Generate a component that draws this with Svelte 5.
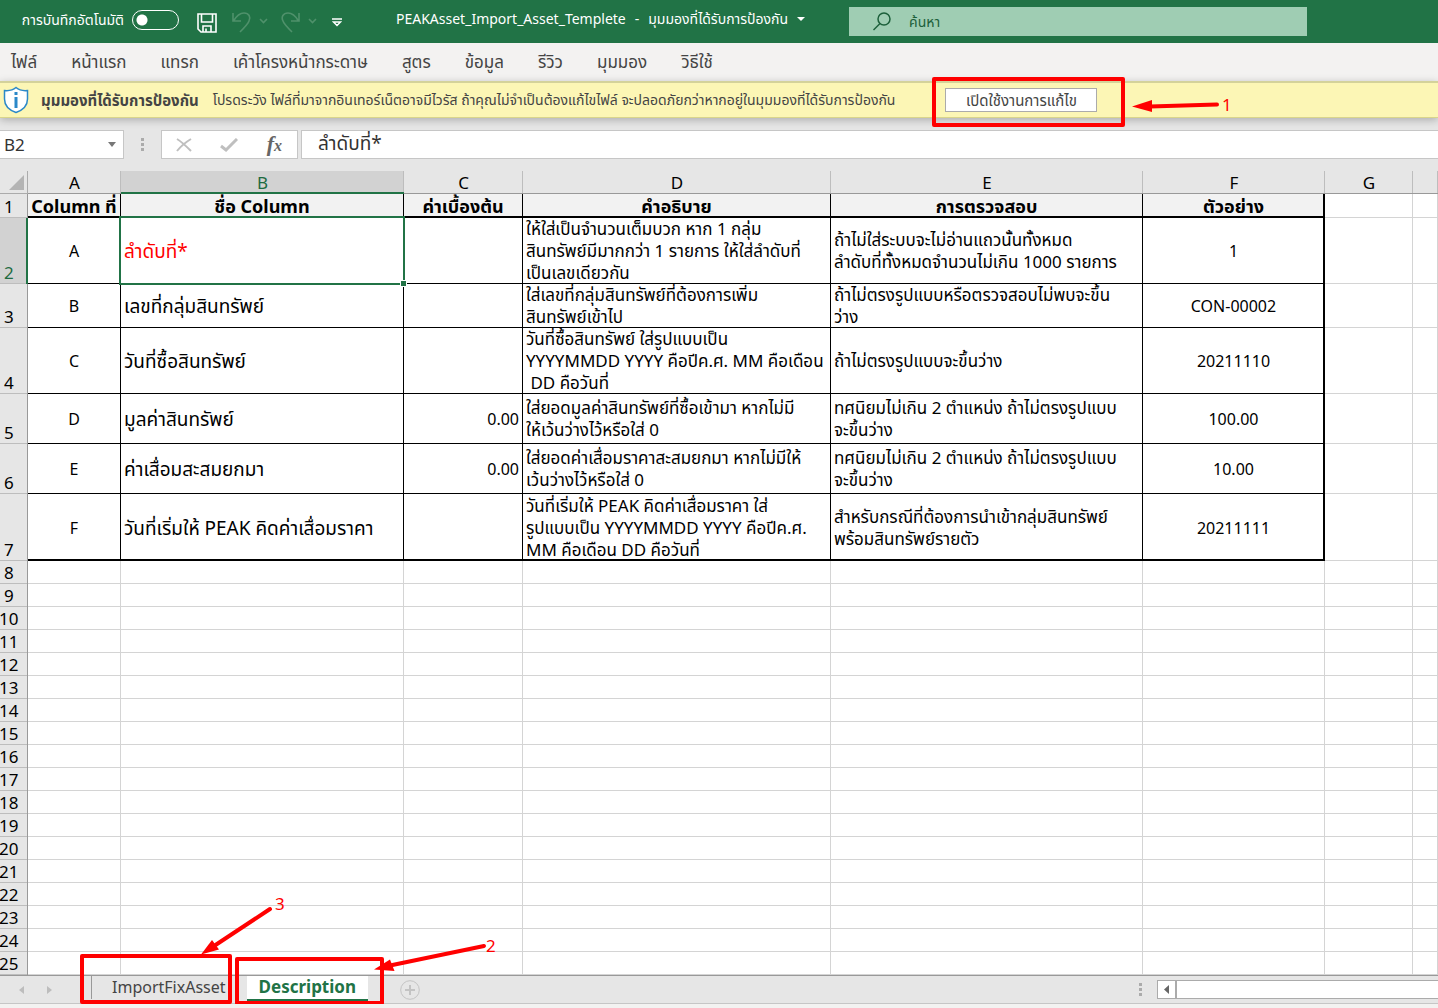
<script lang="ts">

    let autosave = $state(false);
    let search = $state('');
    let cell = $state('B2');
    let formula = $state('ลำดับที่*');
    let sheet = $state('Description');

    const menus = ['ไฟล์', 'หน้าแรก', 'แทรก', 'เค้าโครงหน้ากระดาษ', 'สูตร', 'ข้อมูล', 'รีวิว', 'มุมมอง', 'วิธีใช้'];

    const columns = ['A', 'B', 'C', 'D', 'E', 'F', 'G', ''];

    const titles = ['Column ที่', 'ชื่อ Column', 'ค่าเบื้องต้น', 'คำอธิบาย', 'การตรวจสอบ', 'ตัวอย่าง'];

    const rows = [
        {
            size: 'tall',
            cells: ['A', 'ลำดับที่*', '',
                'ให้ใส่เป็นจำนวนเต็มบวก หาก 1 กลุ่ม\nสินทรัพย์มีมากกว่า 1 รายการ ให้ใส่ลำดับที่\nเป็นเลขเดียวกัน',
                'ถ้าไม่ใส่ระบบจะไม่อ่านแถวนั้นทั้งหมด\nลำดับที่ทั้งหมดจำนวนไม่เกิน 1000 รายการ',
                '1']
        },
        {
            size: 'short',
            cells: ['B', 'เลขที่กลุ่มสินทรัพย์', '',
                'ใส่เลขที่กลุ่มสินทรัพย์ที่ต้องการเพิ่ม\nสินทรัพย์เข้าไป',
                'ถ้าไม่ตรงรูปแบบหรือตรวจสอบไม่พบจะขึ้น\nว่าง',
                'CON-00002']
        },
        {
            size: 'tall',
            cells: ['C', 'วันที่ซื้อสินทรัพย์', '',
                'วันที่ซื้อสินทรัพย์ ใส่รูปแบบเป็น\nYYYYMMDD YYYY คือปีค.ศ. MM คือเดือน\n DD คือวันที่',
                'ถ้าไม่ตรงรูปแบบจะขึ้นว่าง',
                '20211110']
        },
        {
            size: 'medium',
            cells: ['D', 'มูลค่าสินทรัพย์', '0.00',
                'ใส่ยอดมูลค่าสินทรัพย์ที่ซื้อเข้ามา หากไม่มี\nให้เว้นว่างไว้หรือใส่ 0',
                'ทศนิยมไม่เกิน 2 ตำแหน่ง ถ้าไม่ตรงรูปแบบ\nจะขึ้นว่าง',
                '100.00']
        },
        {
            size: 'medium',
            cells: ['E', 'ค่าเสื่อมสะสมยกมา', '0.00',
                'ใส่ยอดค่าเสื่อมราคาสะสมยกมา หากไม่มีให้\nเว้นว่างไว้หรือใส่ 0',
                'ทศนิยมไม่เกิน 2 ตำแหน่ง ถ้าไม่ตรงรูปแบบ\nจะขึ้นว่าง',
                '10.00']
        },
        {
            size: 'last',
            cells: ['F', 'วันที่เริ่มให้ PEAK คิดค่าเสื่อมราคา', '',
                'วันที่เริ่มให้ PEAK คิดค่าเสื่อมราคา ใส่\nรูปแบบเป็น YYYYMMDD YYYY คือปีค.ศ.\nMM คือเดือน DD คือวันที่',
                'สำหรับกรณีที่ต้องการนำเข้ากลุ่มสินทรัพย์\nพร้อมสินทรัพย์รายตัว',
                '20211111']
        }
    ];

    const blanks = Array.from({ length: 18 }, (_, i) => i + 8);

</script>

<div class="app">

    <header class="titlebar">
        <label class="autosave">
            <span>การบันทึกอัตโนมัติ</span>
            <input type="checkbox" bind:checked={autosave} />
        </label>
        <div class="quick">
            <button class="save" aria-label="Save">
                <svg width="20" height="20" viewBox="0 0 20 20" fill="none" stroke="#fff" stroke-width="1.600">
                    <path d="M1 1H19V19H4L1 16Z" />
                    <path d="M4.500 1V9H15.500V1M6 19V13H14V19M9 15.500V19" />
                </svg>
            </button>
            <button class="history" aria-label="Undo">
                <svg width="36" height="21" viewBox="0 0 36 21" fill="none" stroke="#4f916b" stroke-width="1.600">
                    <path d="M1 1V9H9M1.500 9C5 3 8 1 12 1C17 1 19 5 17 9C16 12 13 15 8 20" />
                    <path d="M28 7L31.500 10.500L35 7" />
                </svg>
            </button>
            <button class="history" aria-label="Redo">
                <svg width="36" height="21" viewBox="0 0 36 21" fill="none" stroke="#4f916b" stroke-width="1.600">
                    <path d="M18 1V9H10M17.500 9C14 3 11 1 7 1C2 1 0 5 2 9C3 12 6 15 11 20" />
                    <path d="M28 7L31.500 10.500L35 7" />
                </svg>
            </button>
            <button class="customize" aria-label="Customize">
                <svg width="10" height="9" viewBox="0 0 10 9" fill="none" stroke="#fff" stroke-width="1.500">
                    <path d="M0 1H10M1.500 4L5 7.500L8.500 4Z" />
                </svg>
            </button>
        </div>
        <button class="filename">
            <span>PEAKAsset_Import_Asset_Templete</span>
            <span>-</span>
            <span>มุมมองที่ได้รับการป้องกัน</span>
            <svg width="8" height="4" viewBox="0 0 8 4"><path d="M0 0H8L4 4Z" fill="#fff" /></svg>
        </button>
        <label class="search">
            <svg width="18" height="19" viewBox="0 0 18 19" fill="none" stroke="#1c5f3a" stroke-width="1.500">
                <circle cx="11" cy="7" r="6" />
                <path d="M7 11.500L0.500 18" />
            </svg>
            <input type="text" placeholder="ค้นหา" aria-label="ค้นหา" bind:value={search} />
        </label>
    </header>

    <nav class="ribbon">
        {#each menus as menu}
            <button>{menu}</button>
        {/each}
    </nav>

    <section class="notice">
        <svg width="26" height="28" viewBox="0 0 26 28" fill="none">
            <path d="M13 1.500C10 4 6 5 1.500 4.500V13C1.500 20 6 24 13 26.500C20 24 24.500 20 24.500 13V4.500C20 5 16 4 13 1.500Z" fill="#fff" stroke="#2b88c8" stroke-width="1.500" />
            <path d="M13 6V9M13 11V22" stroke="#2b88c8" stroke-width="3" />
        </svg>
        <strong>มุมมองที่ได้รับการป้องกัน</strong>
        <p>โปรดระวัง ไฟล์ที่มาจากอินเทอร์เน็ตอาจมีไวรัส ถ้าคุณไม่จำเป็นต้องแก้ไขไฟล์ จะปลอดภัยกว่าหากอยู่ในมุมมองที่ได้รับการป้องกัน</p>
        <button>เปิดใช้งานการแก้ไข</button>
    </section>

    <section class="formula">
        <div class="namebox">
            <input type="text" aria-label="Name box" bind:value={cell} />
            <svg width="8" height="5" viewBox="0 0 8 5"><path d="M0 0H8L4 5Z" fill="#777" /></svg>
        </div>
        <div class="dots"></div>
        <div class="tools">
            <button aria-label="Cancel">
                <svg width="16" height="14" viewBox="0 0 16 14" fill="none" stroke="#bfbfbf" stroke-width="2">
                    <path d="M1 1C6 4 10 8 15 13M15 1C10 4 5 8 1 13" />
                </svg>
            </button>
            <button aria-label="Enter">
                <svg width="18" height="14" viewBox="0 0 18 14" fill="none" stroke="#bfbfbf" stroke-width="3">
                    <path d="M1 8L6 12L17 1" />
                </svg>
            </button>
            <button class="fx" aria-label="Insert function"><i>f</i><i class="x">x</i></button>
        </div>
        <input class="content" type="text" aria-label="Formula" bind:value={formula} />
    </section>

    <table>
        <colgroup>
            <col class="w-head" />
            <col class="w-a" />
            <col class="w-b" />
            <col class="w-c" />
            <col class="w-d" />
            <col class="w-e" />
            <col class="w-f" />
            <col class="w-g" />
            <col />
        </colgroup>
        <thead>
            <tr>
                <th class="corner">
                    <svg width="15" height="15" viewBox="0 0 15 15"><path d="M15 0V15H0Z" fill="#b4b4b4" /></svg>
                </th>
                {#each columns as column}
                    <th class="letter" class:active={column === 'B'}>{column}</th>
                {/each}
            </tr>
        </thead>
        <tbody>
            <tr class="titles">
                <th class="number">1</th>
                {#each titles as title}
                    <td class="filled">{title}</td>
                {/each}
                <td></td>
                <td></td>
            </tr>
            {#each rows as row, r}
                <tr class={row.size}>
                    <th class="number" class:active={r === 0}>{r + 2}</th>
                    {#each row.cells as text, c}
                        <td
                            class="filled"
                            class:center={c === 0 || c === 5}
                            class:name={c === 1}
                            class:right={c === 2}
                            class:detail={c === 3 || c === 4}
                            class:selected={r === 0 && c === 1}
                        >{text}</td>
                    {/each}
                    <td></td>
                    <td></td>
                </tr>
            {/each}
            {#each blanks as number}
                <tr>
                    <th class="number">{number}</th>
                    {#each columns as _}
                        <td></td>
                    {/each}
                </tr>
            {/each}
        </tbody>
    </table>

    <footer>
        <div class="arrows">
            <button aria-label="Previous sheet">
                <svg width="5" height="8" viewBox="0 0 5 8"><path d="M5 0V8L0 4Z" fill="#bdbdbd" /></svg>
            </button>
            <button aria-label="Next sheet">
                <svg width="5" height="8" viewBox="0 0 5 8"><path d="M0 0V8L5 4Z" fill="#bdbdbd" /></svg>
            </button>
        </div>
        <div class="sheets">
            {#each ['ImportFixAsset', 'Description'] as name}
                <button class:open={sheet === name} onclick={() => sheet = name}>{name}</button>
            {/each}
        </div>
        <button class="add" aria-label="New sheet">
            <svg width="20" height="20" viewBox="0 0 20 20" fill="none" stroke="#c3c3c3">
                <circle cx="10" cy="10" r="9.300" />
                <path d="M10 5V15M5 10H15" stroke-width="2" />
            </svg>
        </button>
        <div class="dots"></div>
        <div class="scroll">
            <button aria-label="Scroll left">
                <svg width="5" height="9" viewBox="0 0 5 9"><path d="M5 0V9L0 4.500Z" fill="#666" /></svg>
            </button>
            <div class="thumb"></div>
        </div>
    </footer>

    <svg class="marks" width="1438" height="1008" viewBox="0 0 1438 1008">
        <g fill="none" stroke="#f00" stroke-width="4" stroke-linejoin="round">
            <rect x="934" y="79" width="189" height="46" />
            <rect x="82" y="956" width="148" height="46" />
            <rect x="237" y="959" width="145" height="44" />
        </g>
        <g stroke="#f00" stroke-width="4" stroke-linecap="round">
            <path d="M1217 104.500L1150 106.500" />
            <path d="M270 909L214 946" />
            <path d="M484 946L390 965.500" />
        </g>
        <g fill="#f00">
            <path d="M1132 106.500L1152 100V112Z" />
            <path d="M201 954.500L212 940L219 949.500Z" />
            <path d="M374 969.500L390 959.500L394.500 971Z" />
            <text x="1222" y="111">1</text>
            <text x="486" y="952">2</text>
            <text x="275" y="910">3</text>
        </g>
    </svg>

</div>

<style>

    :global(body) {
        margin: 0;

        background-color: #f3f2f1;
    }

    .app {
        position: relative;

        overflow: hidden;

        font-family: "Noto Sans", "Noto Sans Thai", sans-serif;
        font-size: 16px;
        line-height: 22px;
        color: #000;
    }

    button, input {
        margin: 0;
        padding: 0;

        background: none;

        font: inherit;
        color: inherit;

        border: none;
        outline: none;
    }

    button {
        white-space: nowrap;

        cursor: pointer;
    }

    svg {
        display: block;
        flex: none;
    }

    .titlebar {
        display: flex;
        align-items: center;

        height: 43px;

        background-color: #217346;

        font-size: 14px;
        color: #fff;
    }

    .autosave {
        display: flex;
        align-items: center;
        justify-content: flex-end;
        gap: 8px;

        width: 179px;
        height: 40px;
        margin-bottom: 4px;

        white-space: nowrap;
    }

    .autosave input {
        flex: none;

        width: 47px;
        height: 20px;

        background: radial-gradient(circle at 9px 9px, #fff 5px, transparent 6px);

        border: 1px solid #fff;
        border-radius: 10px;

        appearance: none;
    }

    .quick {
        display: flex;
        align-items: center;
        gap: 13px;

        margin: 2px 0 0 18px;
    }

    .quick .save {
        margin-right: 2px;
    }

    .customize {
        padding-left: 2px;
    }

    .filename {
        display: flex;
        align-items: center;
        gap: 9px;

        height: 38px;
        margin-left: 54px;
        margin-bottom: 6px;
    }

    .search {
        display: flex;
        align-items: center;
        gap: 18px;

        box-sizing: border-box;
        width: 458px;
        height: 29px;
        margin-left: 44px;
        padding-left: 24px;

        background-color: #9fcdb3;

        color: #1c5f3a;
    }

    .search input::placeholder {
        color: #1c5f3a;
        opacity: 1;
    }

    .ribbon {
        display: flex;
        align-items: center;
        gap: 34px;

        height: 38px;
        padding-left: 11px;

        background-color: #f3f2f1;

        font-size: 17px;
        color: #444;
    }

    .notice {
        position: relative;

        display: flex;
        align-items: center;

        box-sizing: border-box;
        height: 37px;
        padding-left: 3px;

        background-color: #fcf6b5;

        font-size: 15px;
        color: #444;
        white-space: nowrap;

        border-top: 2px solid #d4d29a;
        border-bottom: 1px solid #d9d58b;
        box-shadow: 0 2px 8px rgba(0, 0, 0, 0.25);
    }

    .notice strong {
        margin-left: 12px;
    }

    .notice p {
        margin: 0 0 0 14px;

        font-size: 14px;
    }

    .notice button {
        box-sizing: border-box;
        width: 152px;
        height: 24px;
        margin-left: 50px;

        background-color: #fff;

        border: 1px solid #ababab;
    }

    .formula {
        display: flex;
        align-items: center;

        box-sizing: border-box;
        height: 53px;

        background-color: #e6e6e6;

        color: #333;
    }

    .namebox, .tools, .content {
        box-sizing: border-box;
        height: 29px;

        background-color: #fff;

        border: 1px solid #c6c6c6;
    }

    .namebox {
        display: flex;
        align-items: center;

        width: 124px;
        padding: 0 7px 0 4px;

        font-size: 17px;

        border-left: none;
    }

    .namebox input {
        flex: 1;
        min-width: 0;
    }

    .dots {
        width: 3px;
        height: 13px;

        background: repeating-linear-gradient(#ababab 0 3px, transparent 3px 5px);
    }

    .formula .dots {
        margin: 0 17px;
    }

    .tools {
        display: flex;
        align-items: center;
        justify-content: space-between;

        width: 137px;
        padding: 0 15px 0 14px;
    }

    .fx {
        font-family: "Liberation Serif", serif;
        font-size: 22px;
        font-weight: 700;
        color: #666;
    }

    .fx .x {
        font-size: 16px;
    }

    .content {
        flex: 1;

        margin-left: 3px;
        padding-left: 16px;

        font-size: 19px;

        border-right: none;
    }

    table {
        width: 100%;

        background-color: #fff;

        table-layout: fixed;
        border-spacing: 0;
    }

    .w-head {
        width: 28px;
    }

    .w-a {
        width: 93px;
    }

    .w-b {
        width: 283px;
    }

    .w-c {
        width: 119px;
    }

    .w-d {
        width: 308px;
    }

    .w-e {
        width: 312px;
    }

    .w-f {
        width: 182px;
    }

    .w-g {
        width: 88px;
    }

    th, td {
        height: 23px;
        padding: 0;

        box-shadow: inset -1px -1px #d4d4d4;
    }

    th {
        background-color: #e6e6e6;

        font-size: 17px;
        font-weight: 400;

        box-shadow: inset -1px -1px #ababab;
    }

    .corner svg {
        margin-left: 9px;
    }

    .letter {
        box-shadow: inset 0 -1px #999, inset -1px 0 #bdbdbd;
    }

    .letter.active {
        background-color: #d2d2d2;

        color: #1e6b41;

        box-shadow: inset 0 -2px #217346, inset -1px 0 #bdbdbd;
    }

    .number {
        line-height: 23px;
        vertical-align: bottom;
        text-align: left;
        text-indent: 4px;

        box-shadow: inset -1px 0 #999, inset 0 -1px #bdbdbd;
    }

    tr:nth-child(n + 10) .number {
        text-indent: -1px;
    }

    .number.active {
        background-color: #d2d2d2;

        color: #1e6b41;

        box-shadow: inset -2px 0 #217346, inset 0 -1px #bdbdbd;
    }

    .filled {
        padding: 0 4px 0 3px;

        white-space: pre;

        box-shadow: inset -1px -1px #000;
    }

    .filled:nth-child(7) {
        box-shadow: inset -2px -1px #000;
    }

    .titles td {
        height: 24px;
    }

    .titles .filled {
        background-color: #f2f2f2;

        font-size: 18px;
        font-weight: 700;
        text-align: center;

        box-shadow: inset -1px -2px #000;
    }

    .titles .filled:nth-child(7), .last .filled:nth-child(7) {
        box-shadow: inset -2px -2px #000;
    }

    .tall td {
        height: 66px;
    }

    .short td {
        height: 44px;
    }

    .medium td {
        height: 50px;
    }

    .last td {
        height: 67px;
    }

    .last .filled {
        box-shadow: inset -1px -2px #000;
    }

    .center {
        text-align: center;
    }

    .name {
        font-size: 19px;
    }

    .right {
        text-align: right;
    }

    .detail {
        font-size: 17px;
    }

    .selected {
        position: relative;

        color: #f00;
    }

    .selected::before {
        position: absolute;
        inset: -2px -1px -1px -2px;

        border: 2px solid #217346;

        content: "";
    }

    .selected::after {
        position: absolute;
        right: -3px;
        bottom: -3px;

        width: 5px;
        height: 5px;

        background-color: #217346;

        border: 1px solid #fff;

        content: "";
    }

    footer {
        display: flex;
        align-items: center;

        box-sizing: border-box;
        height: 29px;

        background-color: #e6e6e6;

        color: #444;

        border-top: 1px solid #999;
        border-bottom: 1px solid #c6c6c6;
    }

    .arrows {
        display: flex;
        gap: 23px;

        width: 72px;
        padding-left: 19px;
    }

    .sheets {
        display: flex;
        align-self: flex-start;
    }

    .sheets button {
        box-sizing: border-box;
        height: 25px;
        padding: 0 21px 4px 20px;
    }

    .sheets button:first-child {
        height: 23px;

        border-left: 1px solid #999;
    }

    .sheets .open {
        padding: 0 12px 2px;

        background-color: #fff;

        font-size: 17px;
        font-weight: 700;
        color: #217346;

        border-bottom: 2px solid #217346;
    }

    .add {
        margin-left: 32px;
    }

    footer .dots {
        margin-left: auto;
    }

    .scroll {
        display: flex;

        box-sizing: border-box;
        width: 281px;
        height: 19px;
        margin-left: 15px;

        background-color: #fff;

        border: 1px solid #ababab;
        border-right: none;
    }

    .scroll button {
        display: flex;
        align-items: center;
        justify-content: center;

        width: 17px;
    }

    .thumb {
        flex: 1;

        border-left: 2px solid #ababab;
    }

    .marks {
        position: absolute;
        top: 0;
        left: 0;

        pointer-events: none;
    }

    .marks text {
        font-size: 17px;
    }

</style>
